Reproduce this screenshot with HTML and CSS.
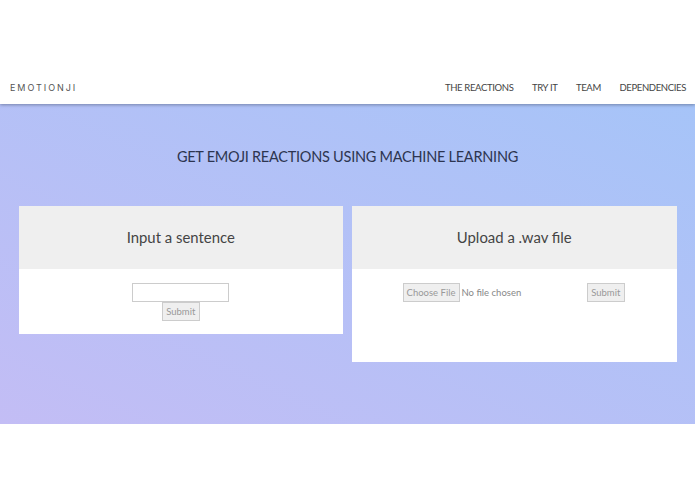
FILE: index.html
```html
<!DOCTYPE html>
<html lang="en">
<head>
<meta charset="utf-8">
<title>Emotionji</title>
<link rel="stylesheet" href="styles.css">
</head>
<body>
<div class="top-space"></div>
<nav class="nav">
  <a class="brand">EMOTIONJI</a>
  <div class="links">
    <a>THE REACTIONS</a>
    <a>TRY IT</a>
    <a>TEAM</a>
    <a>DEPENDENCIES</a>
  </div>
</nav>
<main class="hero">
  <h1 class="headline">GET EMOJI REACTIONS USING MACHINE LEARNING</h1>
  <div class="cards">
    <section class="card">
      <h2 class="card-title">Input a sentence</h2>
      <div class="card-body stacked">
        <div class="text-input"></div>
        <button class="btn">Submit</button>
      </div>
    </section>
    <section class="card">
      <h2 class="card-title">Upload a .wav file</h2>
      <div class="card-body file-row">
        <button class="btn choose">Choose File</button>
        <span class="no-file">No file chosen</span>
        <button class="btn">Submit</button>
      </div>
    </section>
  </div>
</main>
</body>
</html>
```
FILE: styles.css
```css
* { box-sizing: border-box; }
html, body { margin: 0; padding: 0; background: #fff; }
body { font-family: "Lato", "Liberation Sans", sans-serif; height: 494px; overflow: hidden; }
.top-space { height: 72px; }
.nav {
  height: 32px;
  display: flex;
  justify-content: space-between;
  align-items: center;
  padding: 0 9px 2px 10px;
  background: #fff;
  position: relative;
  z-index: 1;
  box-shadow: 0 1px 3px rgba(70, 80, 110, .55);
  clip-path: inset(0 0 -6px 0);
}
.brand {
  font-family: "Inter", sans-serif;
  font-size: 9px;
  letter-spacing: 1.95px;
  color: #555;
}
.links { display: flex; gap: 18.5px; font-size: 9.5px; letter-spacing: -.35px; color: #444; }
.hero {
  height: 320px;
  background: linear-gradient(to top right, #c3bdf5 0%, #a6c4f8 100%);
  padding-top: 43px;
}
.headline {
  margin: 0 0 40px;
  height: 19px;
  line-height: 19px;
  text-align: center;
  font-size: 14.5px;
  font-weight: 400;
  letter-spacing: -.25px;
  color: #2d3550;
}
.cards { display: flex; align-items: flex-start; gap: 9px; padding: 0 18.5px 0 18.5px; }
.card { flex: 1; background: #fff; }
.card-title {
  margin: 0;
  height: 63px;
  line-height: 62px;
  text-align: center;
  background: #efefef;
  font-size: 14.9px;
  font-weight: 400;
  color: #444;
}
.card-body { height: 65px; }
.stacked { display: flex; flex-direction: column; align-items: center; padding-top: 14px; }
.text-input { width: 97px; height: 19px; background: #fff; border: 1px solid #ccc; }
.btn {
  height: 19px;
  padding: 0;
  font: 9.5px "Lato", sans-serif;
  color: #999;
  background: #efefef;
  border: 1px solid #ccc;
}
.stacked .btn { width: 38.5px; }
.file-row { height: 93px; display: flex; align-items: flex-start; padding: 14px 0 0 50.5px; }
.file-row .btn { width: 38.5px; }
.file-row .choose { width: 57px; }
.no-file { width: 127px; padding-left: 2px; height: 19px; line-height: 19px; font-size: 9.5px; color: #888; }
```
